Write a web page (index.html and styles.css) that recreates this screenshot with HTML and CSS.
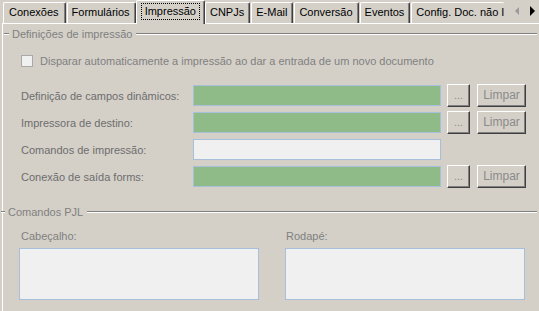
FILE: index.html
```html
<!DOCTYPE html>
<html>
<head>
<meta charset="utf-8">
<link rel="stylesheet" href="styles.css">
</head>
<body>
<div class="window">
  <div class="tabbar">
    <div class="tabs">
      <div class="tab">Conexões</div>
      <div class="tab">Formulários</div>
      <div class="tab active"><span class="focus">Impressão</span></div>
      <div class="tab">CNPJs</div>
      <div class="tab">E-Mail</div>
      <div class="tab">Conversão</div>
      <div class="tab">Eventos</div>
      <div class="tab last">Config. Doc. não I</div>
    </div>
    <div class="arrows">
      <svg width="26" height="20" viewBox="0 0 26 20">
        <path d="M6 6 L2 10 L6 14 Z" fill="#9a9a9a"/>
        <path d="M17 5 L22 10 L17 15 Z" fill="#000"/>
      </svg>
    </div>
  </div>
  <div class="panel">
    <div class="legend first"><span class="dash"></span><span class="ltext">Definições de impressão</span><span class="line"></span></div>
    <div class="checkrow"><span class="check"></span><span class="ctext">Disparar automaticamente a impressão ao dar a entrada de um novo documento</span></div>
    <div class="rows">
      <div class="row"><span class="label">Definição de campos dinâmicos:</span><span class="input green"></span><span class="btn dots">...</span><span class="btn limpar">Limpar</span></div>
      <div class="row"><span class="label">Impressora de destino:</span><span class="input green"></span><span class="btn dots">...</span><span class="btn limpar">Limpar</span></div>
      <div class="row"><span class="label">Comandos de impressão:</span><span class="input white"></span></div>
      <div class="row"><span class="label">Conexão de saída forms:</span><span class="input green"></span><span class="btn dots">...</span><span class="btn limpar">Limpar</span></div>
    </div>
    <div class="legend second"><span class="dash short"></span><span class="ltext">Comandos PJL</span><span class="line"></span></div>
    <div class="pjl">
      <div class="pcol left"><div class="plabel">Cabeçalho:</div><div class="memo"></div></div>
      <div class="pcol right"><div class="plabel">Rodapé:</div><div class="memo"></div></div>
    </div>
  </div>
</div>
</body>
</html>
```

FILE: styles.css
```css
* { box-sizing: border-box; }
html, body { margin: 0; padding: 0; }
body {
  background: #d4d0c8;
  font-family: "Liberation Sans", Arial, sans-serif;
  font-size: 11px;
  width: 539px;
  height: 311px;
  overflow: hidden;
}
.window { width: 539px; height: 311px; position: relative; }
.tabbar {
  height: 24px;
  display: flex;
  align-items: flex-end;
  position: relative;
  z-index: 2;
}
.tabs {
  display: flex;
  align-items: flex-end;
  padding-left: 3px;
  width: 513px;
  overflow: hidden;
  flex: none;
}
.tab {
  height: 21px;
  line-height: 19px;
  padding: 0 5px 0 4px;
  border-top: 1px solid #fff;
  border-left: 1px solid #fff;
  border-right: 1px solid #404040;
  box-shadow: inset -1px 0 0 #808080;
  border-radius: 2px 2px 0 0;
  color: #000;
  white-space: nowrap;
  flex: none;
  margin-right: 1px;
  margin-bottom: 1px;
}
.tab:first-child { padding: 0 6px 0 5px; }
.tab.active {
  height: 24px;
  margin-left: -1px;
  margin-right: 0;
  margin-bottom: 0;
  padding: 0 5px;
  line-height: 20px;
  background: #d4d0c8;
}
.tab.active .focus {
  display: inline-block;
  outline: 1px dotted #000;
  line-height: 15px;
  padding: 0 3px;
}
.tab.last { border-right: none; box-shadow: none; padding-right: 0; }
.arrows {
  flex: none;
  width: 26px;
  height: 20px;
  display: flex;
  align-items: center;
  margin-bottom: 3px;
  overflow: hidden;
}
.panel {
  border-top: 1px solid #fff;
  border-left: 1px solid #fff;
  margin-left: 2px;
  margin-top: -1px;
  height: 288px;
  position: relative;
  z-index: 1;
}
.legend {
  display: flex;
  align-items: center;
  height: 14px;
  color: #808080;
}
.legend.first { margin-top: 3px; }
.dash, .line {
  height: 2px;
  border-top: 1px solid #808080;
  border-bottom: 1px solid #fff;
  flex: none;
}
.dash { width: 5px; margin-left: 1px; }
.dash.short { width: 4px; margin-left: -2px; }
.ltext { padding: 0 4px 0 3px; line-height: 14px; white-space: nowrap; }
.line { flex: 1; margin-right: 2px; }
.checkrow {
  display: flex;
  align-items: center;
  margin-top: 13px;
  padding-left: 18px;
  height: 14px;
  color: #808080;
  white-space: nowrap;
}
.check {
  width: 12px;
  height: 12px;
  border: 1px solid #a9a9a9;
  background: #f0f0f0;
  margin-right: 7px;
  flex: none;
}
.rows {
  margin-top: 16px;
  display: flex;
  flex-direction: column;
  gap: 4px;
}
.row {
  display: flex;
  align-items: center;
  height: 23px;
  padding-left: 18px;
}
.label {
  width: 172px;
  color: #6d6d6d;
  flex: none;
  white-space: nowrap;
}
.input {
  width: 248px;
  height: 21px;
  border: 1px solid #a8bfdc;
  flex: none;
}
.input.green { background: #8ebb88; }
.input.white { background: #f0f0f0; }
.btn {
  height: 23px;
  border-top: 1px solid #fff;
  border-left: 1px solid #fff;
  border-right: 1px solid #404040;
  border-bottom: 1px solid #404040;
  box-shadow: inset -1px -1px 0 #808080;
  color: #8a8a8a;
  text-align: center;
  line-height: 20px;
  flex: none;
}
.btn.dots { width: 23px; margin-left: 6px; }
.btn.limpar { width: 49px; margin-left: 7px; font-size: 12px; }
.legend.second { margin-top: 17px; }
.pjl {
  display: flex;
  padding-left: 16px;
  margin-top: 10px;
}
.pcol { flex: none; }
.pcol.left { width: 266px; }
.pcol.right { width: 241px; }
.plabel {
  color: #808080;
  height: 14px;
  line-height: 14px;
  padding-left: 2px;
  margin-bottom: 5px;
  white-space: nowrap;
}
.pcol.right .plabel { padding-left: 1px; }
.memo {
  width: 240px;
  height: 52px;
  border: 1px solid #a8bfdc;
  background: #f0f0f0;
}
```
